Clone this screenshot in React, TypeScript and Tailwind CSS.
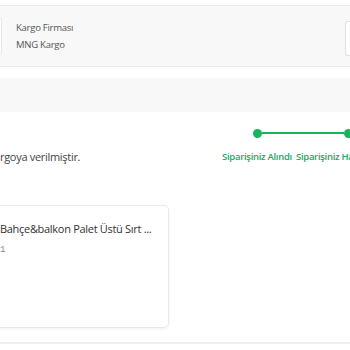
import React from "react";

export default function App() {
  const font = { fontFamily: '"Open Sans", "Noto Sans", sans-serif' };
  return (
    <div className="w-[350px] h-[350px] overflow-hidden bg-white relative" style={font}>
      <div className="h-[5px]" />
      {/* cargo info panel */}
      <div className="h-[62px] bg-[#f8f8f8] border-t border-b border-[#ececec] flex items-center justify-between">
        <div className="flex items-center h-full">
          <div className="w-[2px] h-[36px] border border-l-0 border-[#e6e6e6] rounded-r-[3px] bg-white" />
          <div className="ml-[14px] flex flex-col gap-[3px] text-[9.5px] leading-[14px] text-[#555] tracking-[-0.25px]">
            <span>Kargo Firması</span>
            <span>MNG Kargo</span>
          </div>
        </div>
        <div className="w-[5px] h-[35px] mt-[4px] border border-r-0 border-[#e2e2e2] rounded-l-[3px] bg-white" />
      </div>
      <div className="h-[11px]" />
      <div className="h-[34px] bg-[#f8f8f8]" />
      {/* status row */}
      <div className="flex justify-between mt-[15px]">
        <div className="pt-[22px] text-[11px] leading-[16px] text-[#444] tracking-[-0.3px]">rgoya verilmiştir.</div>
        <div className="flex">
          <div className="flex flex-col items-center w-[72px]">
            <div className="flex items-center w-full h-[12px]">
              <div className="flex-1" />
              <div className="w-[9px] h-[9px] rounded-full bg-[#16b55a]" />
              <div className="flex-1 h-[2px] bg-[#16b55a]" />
            </div>
            <span className="mt-[11px] text-[9.5px] leading-[14px] font-semibold text-[#22a862] tracking-[-0.3px] whitespace-nowrap">Siparişiniz Alındı</span>
          </div>
          <div className="flex flex-col items-start w-[57px]">
            <div className="flex items-center w-full h-[12px]">
              <div className="w-[51px] h-[2px] bg-[#16b55a] shrink-0" />
              <div className="w-[9px] h-[9px] rounded-full bg-[#16b55a] shrink-0" />
            </div>
            <span className="mt-[11px] ml-[3px] text-[9.5px] leading-[14px] font-semibold text-[#22a862] tracking-[-0.3px] whitespace-nowrap">Siparişiniz Hazırlanıyor</span>
          </div>
        </div>
      </div>
      {/* product card */}
      <div className="mt-[40px] w-[169px] h-[123px] border border-l-0 border-[#e8e8e8] rounded-r-[5px] shadow-[0_1px_3px_rgba(0,0,0,0.06)] pt-[15px]">
        <div className="text-[11px] leading-[16px] text-[#333] whitespace-nowrap tracking-[-0.3px]">Bahçe&amp;balkon Palet Üstü Sırt ...</div>
        <div className="mt-[6px] text-[9px] leading-[14px] text-[#888]" style={{ fontFamily: '"Liberation Mono", monospace' }}>1</div>
      </div>
      <div className="mt-[14px] h-[2px] bg-[#eeeeee]" />
    </div>
  );
}
